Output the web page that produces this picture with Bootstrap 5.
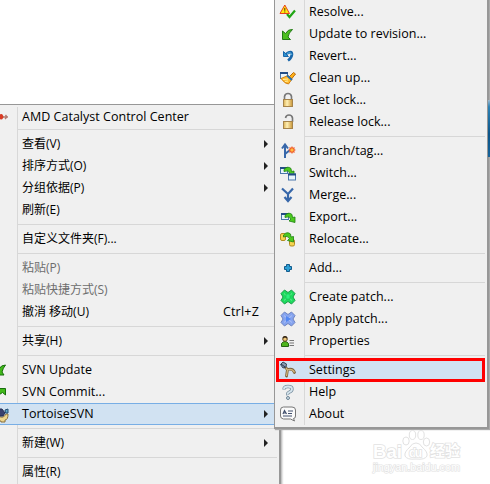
<!DOCTYPE html>
<html lang="zh-CN">
<head>
<meta charset="utf-8">
<meta name="viewport" content="width=device-width, initial-scale=1">
<title>TortoiseSVN</title>
<link href="https://cdn.jsdelivr.net/npm/bootstrap@5.3.0/dist/css/bootstrap.min.css" rel="stylesheet">
<style>
body{width:490px;height:484px;font-family:"Open Sans","Noto Sans CJK SC",sans-serif;font-size:12px;color:#000;line-height:22px}
.desk{width:490px;height:484px;background:#fff}
.ctx{background:#f0f0f0;position:absolute;box-sizing:border-box}
.ctx-main{left:0;top:104px;width:281px;height:384px;border-top:1px solid #979797;border-right:2px solid #979797;box-shadow:1px 2px 2px #aaa;padding-top:1px}
.ctx-sub{left:274px;top:-4px;width:215px;height:433px;border:1px solid #979797;border-right-width:2px;border-bottom-width:2px;box-shadow:1px 1px 1px #aaa;padding-top:4px}
.ctx::before{content:"";position:absolute;top:2px;bottom:2px;left:17px;width:1px;background:#d8d8d8}
.ctx-sub::before{left:29px}
.mi{height:22px;position:relative;white-space:nowrap}
.ctx-main .mi{padding-left:22px}
.ctx-sub .mi{padding-left:34px}
.first{height:20px}
.sp{height:7px;padding-top:3px;margin-left:18px;margin-right:2px}
.ctx-sub .sp{margin-left:30px;margin-right:2px}
.sp::before{content:"";display:block;height:1px;background:#d7d7d7}
.en{font-size:12.5px;letter-spacing:.02px}
.off{color:#6d6d6d}
.hot{background:#d1e2f2;border-top:1px solid #78aee5;border-bottom:1px solid #78aee5;line-height:20px}
.sub::after{content:"";position:absolute;right:11px;top:7px;border:4px solid transparent;border-left-color:#222;border-right:0}
.hot.sub::after{top:6px}
.key{position:absolute;right:20px;top:0;letter-spacing:.2px}
.pick{outline:3px solid #f00;outline-offset:-3px;background:#d1e2f2;margin:0 2px 0 1px;height:24px;margin-top:-1px;margin-bottom:-1px;line-height:24px}
.ctx-sub .pick{padding-left:33px}
.mi svg{position:absolute;left:5px;top:3px;width:16px;height:16px;overflow:visible}
.ctx-main .mi svg{left:-10px}
.ctx-sub .pick svg{left:4px;top:4px}
.edge{position:absolute;z-index:2;left:488px;top:100px;width:2px;height:57px;background:linear-gradient(#9db9cf,#2d82b5 12%,#0c558a 60%,#16639a)}
.wm{position:absolute;left:370px;top:428px;width:120px;height:52px}
</style>
<script src="https://cdn.jsdelivr.net/npm/bootstrap@5.3.0/dist/js/bootstrap.bundle.min.js"></script>
</head>
<body class="m-0 overflow-hidden">
<svg width="0" height="0" class="position-absolute">
<defs>
<linearGradient id="gold" x2="1"><stop stop-color="#d9ae50"/><stop offset=".4" stop-color="#fff0b5"/><stop offset="1" stop-color="#c99535"/></linearGradient>
<g id="swoop"><path d="M4.500 4.500Q8 .5 11.500 3.500L12 6.500L14.500 6V11.500L8.500 10L10.500 8Q8.500 4.500 4.500 6.500Z" fill="#4cc91f" stroke="#1c8010" stroke-width=".8"/></g>
<g id="win"><rect x=".5" y=".5" width="7" height="6" fill="#e8f5fc" stroke="#4a76ac"/><path d="M0 1H8" stroke="#234d86" stroke-width="2"/></g>
<g id="cross4"><path d="M4.500 1L8 3.500 11.500 1 15 4.500 13 8 15 11.500 11.500 15 8 12.500 4.500 15 1 11.500 3 8 1 4.500Z" stroke-linejoin="round"/><path d="M4 4.500L8 8L4 11.500M12 4.500L8 8L12 11.500" fill="none" stroke="#fff" stroke-opacity=".35"/></g>
</defs></svg>
<main class="desk position-relative overflow-hidden">
<div class="edge"></div>
<nav class="ctx ctx-main">
<div class="mi first en">AMD Catalyst Control Center<svg viewBox="0 0 16 16"><path d="M8 5.500L12 5L14 8L12 10.500L8 10Z" fill="#d93b24"/><path d="M13 8H18M15.500 6L17 8L15 10" stroke="#b2796e" stroke-width="1.300" fill="none"/></svg></div>
<div class="sp"></div>
<div class="mi sub">查看(V)</div>
<div class="mi sub">排序方式(O)</div>
<div class="mi sub">分组依据(P)</div>
<div class="mi">刷新(E)</div>
<div class="sp"></div>
<div class="mi">自定义文件夹(F)...</div>
<div class="sp"></div>
<div class="mi off">粘贴(P)</div>
<div class="mi off">粘贴快捷方式(S)</div>
<div class="mi">撤消 移动(U)<span class="key en">Ctrl+Z</span></div>
<div class="sp"></div>
<div class="mi sub">共享(H)</div>
<div class="sp"></div>
<div class="mi en">SVN Update<svg viewBox="0 0 16 16"><path d="M15.500 3Q11 3 9 7L7 4.500V13H14L12 10Q13 6 15.500 3Z" fill="#42b91a" stroke="#176e0c"/></svg></div>
<div class="mi en">SVN Commit...<svg viewBox="0 0 16 16"><path d="M7 4.500H15.500V11L12.500 8.500L8 11.500H4Q5 8 10 6Z" fill="#42b91a" stroke="#176e0c"/></svg></div>
<div class="mi sub hot en">TortoiseSVN<svg viewBox="0 0 16 16"><path d="M7 8Q13 13 16 7L18 7Q18 13 15 13V15H11V14H7Z" fill="#eed68c" stroke="#8a713d"/><path d="M7 2H12L15 6L13 9L7 9Z" fill="#39426e" stroke="#252c50"/><path d="M15 3L18 2V6H15.500Z" fill="#62a5c8" stroke="#234e72"/></svg></div>
<div class="sp"></div>
<div class="mi sub">新建(W)</div>
<div class="sp"></div>
<div class="mi">属性(R)</div>
</nav>
<nav class="ctx ctx-sub en">
<div class="mi">Resolve...<svg viewBox="0 0 16 16"><path d="M7 10L9.500 13L15 6.500" fill="none" stroke="#20a514" stroke-width="2.200"/><path d="M4.800 1L9.500 9.500H0Z" fill="#ffe910" stroke="#e8401c" stroke-width="1" stroke-linejoin="round"/><path d="M4.800 4V6.800M4.800 7.500V8.500" stroke="#5a2700" stroke-width="1"/></svg></div>
<div class="mi">Update to revision...<svg viewBox="0 0 16 16"><path d="M12.500 3.500Q8 3 5.500 7.500L2.500 5V13.500H10.500L8 11Q8.500 7 12.500 3.500Z" fill="#4bbf20" stroke="#237a16"/></svg></div>
<div class="mi">Revert...<svg viewBox="0 0 16 16"><path d="M6 6Q12 2 12 6.500Q11.500 10 8 12.500" fill="none" stroke="#1a67aa" stroke-width="2.600"/><path d="M3.500 3.500V8.500H8.500Z" fill="#2c91cf" stroke="#1a67aa"/><path d="M7 5.500Q11.500 3.500 11.800 7" stroke="#54b5e7" fill="none"/></svg></div>
<div class="mi">Clean up...<svg viewBox="0 0 16 16"><use href="#win" x="0" y="2"/><path d="M1 8.500L8 5.500L12 9L8.500 14Q5 14 1 8.500Z" fill="#ffbd32" stroke="#d07d10"/><path d="M3 9.500L8 9M5 11.500L8 11" stroke="#fff0a0"/><path d="M9 7L13.500 2.500L15.500 4L11.500 9Z" fill="#ffb219" stroke="#ba6b0a"/><path d="M7 5.500L12 10" stroke="#246dae" stroke-width="1.800"/></svg></div>
<div class="mi">Get lock...<svg viewBox="0 0 16 16"><path d="M4.500 8V4.500Q5 1.500 8 1.500T11.500 4.500V8" fill="none" stroke="#777" stroke-width="1.600"/><rect x="3.500" y="7.500" width="9" height="7" fill="url(#gold)" stroke="#a5834a"/></svg></div>
<div class="mi">Release lock...<svg viewBox="0 0 16 16"><path d="M5.500 4Q6 1 9 1T12.500 4V8" fill="none" stroke="#777" stroke-width="1.600"/><rect x="3.500" y="7.500" width="9" height="7" fill="url(#gold)" stroke="#a5834a"/></svg></div>
<div class="sp"></div>
<div class="mi">Branch/tag...<svg viewBox="0 0 16 16"><path d="M5 15V3M2 5.500L5 1.500L8 5.500M5 11L10 7" fill="none" stroke="#3767aa" stroke-width="2"/><path d="M12 3.500V10.500M8.500 7H15.500M9.500 4.500L14.500 9.500M14.500 4.500L9.500 9.500" stroke="#f0683a" stroke-width="1.200"/><circle cx="12" cy="7" r="2.200" fill="#ffbd40" stroke="#f05024"/></svg></div>
<div class="mi">Switch...<svg viewBox="0 0 16 16"><use href="#win" x="0" y="2"/><use href="#swoop" x="-.5" y="0"/><use href="#win" x="8" y="8.500"/></svg></div>
<div class="mi">Merge...<svg viewBox="0 0 16 16"><path d="M2 1.500L8 7L13 1.500M8 6V14M4.500 10L8 14L11.500 10" fill="none" stroke="#3767aa" stroke-width="2.200"/></svg></div>
<div class="mi">Export...<svg viewBox="0 0 16 16"><use href="#win" x="1" y="4"/><use href="#swoop" x=".5" y="2"/></svg></div>
<div class="mi">Relocate...<svg viewBox="0 0 16 16"><rect x=".5" y="2.500" width="5" height="7" rx="1.500" fill="#f5d34f" stroke="#b28c21"/><rect x="9.500" y="8.500" width="5" height="6.500" rx="1.500" fill="#f5d34f" stroke="#b28c21"/><use href="#swoop" x="-1" y="-.5"/></svg></div>
<div class="sp"></div>
<div class="mi">Add...<svg viewBox="0 0 16 16"><path d="M6.500 4.500H9.500V6.500H11.500V9.500H9.500V11.500H6.500V9.500H4.500V6.500H6.500Z" fill="#2da0d5" stroke="#135b8d"/></svg></div>
<div class="sp"></div>
<div class="mi">Create patch...<svg viewBox="0 0 16 16"><use href="#cross4" fill="#1edb5e" stroke="#1b9a48"/><rect x="6" y="5" width="4" height="5" fill="#2df07b" stroke="#16b44e" stroke-width=".5"/></svg></div>
<div class="mi">Apply patch...<svg viewBox="0 0 16 16"><use href="#cross4" fill="#86a4ef" stroke="#6e83bf"/><path d="M6 5L11 8L6 11Z" fill="#5187f3"/></svg></div>
<div class="mi">Properties<svg viewBox="0 0 16 16"><path d="M1.500 13.500V10.500Q3 8.500 5 8.500T8.500 10.500V13.500Z" fill="#4eb51d" stroke="#276414"/><circle cx="5" cy="6" r="2.300" fill="#efc879" stroke="#60451e"/><path d="M3 5Q5 2.500 7 5" stroke="#322515" fill="none" stroke-width="1.300"/><path d="M9.500 7.500H14M9.500 10H14M9.500 12.500H14" stroke="#777" stroke-width="1.200"/></svg></div>
<div class="sp"></div>
<div class="mi pick">Settings<svg viewBox="0 0 16 16"><path d="M5 5L7.500 7.500L6.500 14M7.500 7.500Q13 6 14.500 10.500" fill="none" stroke="#79623b" stroke-width="2.800" stroke-linecap="round"/><path d="M6 6L7.500 8L6.500 14M8 7.600Q13 6.500 14.500 10.500" fill="none" stroke="#d4b77e" stroke-width="1.300"/><path d="M.5 2.500L3 0L6.500 2L6 5L3 6Z" fill="#8798ae" stroke="#3a4558"/><path d="M1 2L5 5" stroke="#26344b"/></svg></div>
<div class="mi">Help<svg viewBox="0 0 16 16"><path d="M4 5.500Q4 2.500 8 2.500T12 5Q12 7 9.500 8T8 11" fill="none" stroke="#7d92a1" stroke-width="3.400"/><path d="M4 5Q4 2.500 8 2.500T12 5Q12 7 9.500 8T8 10.500" fill="none" stroke="#d7e6ef" stroke-width="1.800"/><circle cx="8" cy="14" r="1.500" fill="#d0e0e9" stroke="#6d8495"/></svg></div>
<div class="mi">About<svg viewBox="0 0 16 16"><path d="M3.500 1H12Q15.500 1 15.500 4V10Q15.500 12.500 13.500 12.500L14.500 15L10.500 13H3.500Q.5 12.500 .5 10V4Q.5 1 3.500 1Z" fill="#fafafa" stroke="#777"/><path d="M3 8L4.500 4.500L6.500 8M3.500 7H6M8 5H13M8 7.500H12M3 10H12" fill="none" stroke="#42506e" stroke-width="1.200"/></svg></div>
</nav>
<svg class="wm" viewBox="0 0 120 52" fill="#fff" stroke="#e2e2e2" stroke-width="1">
<text x="3" y="29.500" font-size="19" textLength="29" lengthAdjust="spacingAndGlyphs" font-family="Liberation Sans, sans-serif" font-weight="700" paint-order="stroke" stroke-width="1.600">Bai</text>
<ellipse cx="36" cy="13" rx="3.200" ry="4"/><ellipse cx="42.500" cy="7" rx="3.200" ry="4.500"/><ellipse cx="51" cy="7" rx="3.200" ry="4.500"/><ellipse cx="56.500" cy="14" rx="3.200" ry="4"/><path d="M46 15Q50 15 52 19Q58 24 57 28Q55 32 46 31Q37 32 35 28Q34 24 40 19Q42 15 46 15Z"/>
<g paint-order="stroke" stroke-width="1.600"><text x="39" y="29" font-size="12" font-weight="700" font-family="Liberation Sans, sans-serif" textLength="13">du</text><text x="60" y="28" font-size="15" font-weight="700" font-family="Noto Sans CJK SC, sans-serif" textLength="30">经验</text><text x="3" y="42.500" font-size="10" font-family="Liberation Sans, sans-serif" textLength="87" lengthAdjust="spacingAndGlyphs" stroke-width="1.200">jingyan.baidu.com</text></g>
</svg>
</main>
</body>
</html>
